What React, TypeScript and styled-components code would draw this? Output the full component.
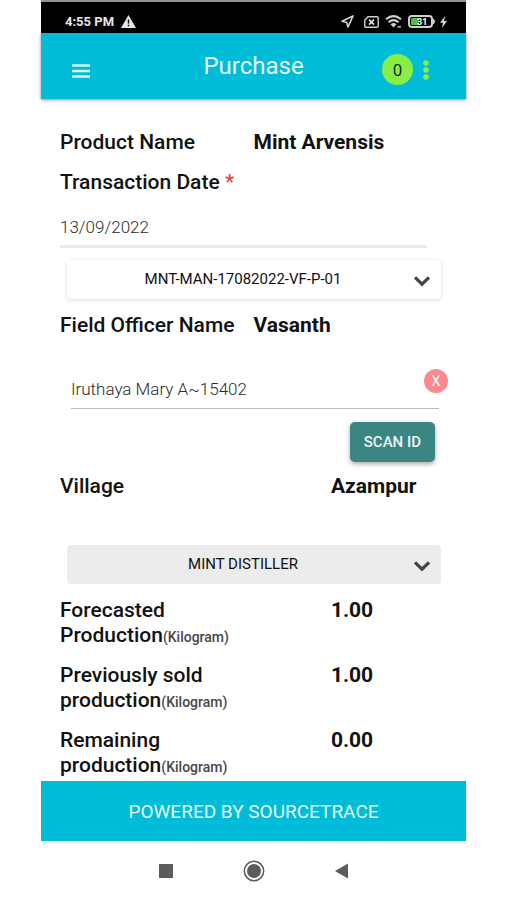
import React from "react";
import styled, { createGlobalStyle } from "styled-components";

const GlobalStyle = createGlobalStyle`
  *, *::before, *::after { box-sizing: border-box; }
  body {
    margin: 0;
    background: #fff;
    color: #121212;
    font-family: Roboto, "Liberation Sans", sans-serif;
  }
  button, input, select { font-family: inherit; }
`;

const Screen = styled.div`
  display: flex;
  flex-direction: column;
  min-height: 100vh;
  margin: 0 40px 0 41px;
`;

const StatusBar = styled.div`
  display: flex;
  align-items: center;
  justify-content: space-between;
  height: 33px;
  padding: 8px 19px 0 24px;
  border-top: 2px solid #929292;
  background: #000;
  color: #e6e6e6;
`;

const StatusGroup = styled.div<{ $gap: number }>`
  display: flex;
  align-items: center;
  gap: ${(p) => p.$gap}px;
`;

const Clock = styled.span`
  font-size: 13px;
  font-weight: 700;
  line-height: 16px;
`;

const Header = styled.header`
  display: grid;
  grid-template-columns: 78px 1fr 78px;
  align-items: center;
  height: 66px;
  background: #00bcd9;
  box-shadow: 0 1px 3px rgba(0, 0, 0, 0.45);
`;

const Title = styled.h1`
  margin: 0;
  color: #e4fbff;
  font-size: 24px;
  font-weight: 400;
  line-height: 28px;
  text-align: center;
`;

const IconButton = styled.button`
  display: flex;
  padding: 0;
  border: 0;
  background: none;
  cursor: pointer;
`;

const MenuButton = styled(IconButton)`
  padding: 10px 0 0 31px;
`;

const HeaderActions = styled.div`
  display: flex;
  align-items: center;
  justify-content: flex-end;
  gap: 10px;
  padding: 7px 37px 0 0;
`;

const Count = styled.span`
  display: flex;
  flex: none;
  align-items: center;
  justify-content: center;
  width: 31px;
  height: 31px;
  border-radius: 50%;
  background: #86ee46;
  color: #17300c;
  font-size: 17px;
`;

const Form = styled.form`
  display: flex;
  flex: 1;
  flex-direction: column;
  padding: 31px 19px 3px;
`;

const Row = styled.div<{ $label: number; $gap: number }>`
  display: grid;
  grid-template-columns: ${(p) => p.$label}% 1fr;
  margin-bottom: ${(p) => p.$gap}px;
  font-size: 21px;
  line-height: 25px;

  &:last-child { margin-bottom: 0; }
`;

const Label = styled.span`
  font-weight: 500;
  white-space: nowrap;
`;

const Value = styled.span`
  font-weight: 700;
`;

const Line = styled.span`
  display: block;
`;

const Unit = styled.small`
  color: #484848;
  font-size: 14px;
  font-weight: 500;
  line-height: 16px;
`;

const DateLabel = styled.label`
  font-size: 21px;
  font-weight: 500;
  line-height: 25px;
`;

const Required = styled.span`
  color: #f44336;
`;

const TextInput = styled.input`
  width: 100%;
  height: 40px;
  padding: 0;
  border: 0;
  border-bottom: 1px solid #bdbdbd;
  border-radius: 0;
  background: none;
  color: #2c2c2c;
  font-size: 17px;
  font-weight: 300;
  outline: none;
`;

const DateInput = styled(TextInput)`
  width: auto;
  margin: 13px 20px 12px 0;
  border-bottom: 3px solid #ebebeb;
`;

const SelectBox = styled.div<{ $filled?: boolean }>`
  display: grid;
  grid-template-columns: 1fr;
  align-items: center;
  margin: 0 6px 14px 7px;
  border-radius: 4px;
  background: ${(p) => (p.$filled ? "#ececec" : "#fff")};
  box-shadow: ${(p) => (p.$filled ? "none" : "0 1px 4px rgba(0, 0, 0, 0.15)")};

  > * { grid-area: 1 / 1; }
  > svg { justify-self: end; margin: 2px 10px 0 0; pointer-events: none; }
`;

const Select = styled.select`
  width: 100%;
  height: 39px;
  padding: 0 34px 2px 12px;
  border: 0;
  appearance: none;
  background: none;
  color: #111;
  font-size: 15px;
  font-weight: 400;
  text-align: center;
  text-align-last: center;
`;

const FarmerField = styled.div`
  position: relative;
  margin: 0 8px 13px 11px;
`;

const ClearButton = styled.button`
  position: absolute;
  top: 0;
  right: -9px;
  width: 24px;
  height: 24px;
  padding: 0;
  border: 0;
  border-radius: 50%;
  background: #f98a8c;
  color: #fff;
  font-size: 15px;
  line-height: 24px;
  cursor: pointer;
`;

const ScanButton = styled.button`
  align-self: flex-end;
  height: 40px;
  margin: 0 12px 12px 0;
  padding: 0 14px 1px;
  border: 0;
  border-radius: 5px;
  background: #3b8582;
  box-shadow: 0 2px 5px rgba(0, 0, 0, 0.35);
  color: #e9f6f5;
  font-size: 15px;
  font-weight: 500;
  cursor: pointer;
`;

const Footer = styled.footer`
  display: flex;
  align-items: center;
  justify-content: center;
  height: 60px;
  background: #00bcd9;
  color: #e4fbff;
  font-size: 19px;
`;

const NavBar = styled.nav`
  display: flex;
  align-items: center;
  justify-content: center;
  gap: 66px;
  height: 59px;
`;

const Chevron = () => (
  <svg width="18" height="12" viewBox="0 0 18 12" fill="none" aria-hidden="true">
    <path d="M2 2.3 9 9.2l7-6.9" stroke="#454545" strokeWidth="3.2" />
  </svg>
);

const WarningIcon = () => (
  <svg width="15" height="13" viewBox="0 0 15 13" aria-hidden="true">
    <path d="M7.5 0 15 13H0Z" fill="#e6e6e6" />
    <path d="M7.5 4.5v4M7.5 9.7v1.6" stroke="#000" strokeWidth="1.4" />
  </svg>
);

const LocationIcon = () => (
  <svg width="13" height="13" viewBox="0 0 13 13" fill="none" aria-hidden="true">
    <path d="M12 1 1 6.2l4.6 1.2L7 12Z" stroke="#d5d5d5" strokeWidth="1.6" strokeLinejoin="round" />
  </svg>
);

const SimIcon = () => (
  <svg width="15" height="12" viewBox="0 0 15 12" fill="none" aria-hidden="true">
    <path d="M4 .8h9q1.2 0 1.2 1.2v8q0 1.2-1.2 1.2H2Q.8 11.2.8 10V4Z" stroke="#cfcfcf" strokeWidth="1.4" />
    <path d="m5 3.6 5 5m0-5-5 5" stroke="#e6e6e6" strokeWidth="1.6" />
  </svg>
);

const WifiIcon = () => (
  <svg width="17" height="13" viewBox="0 0 17 13" fill="none" aria-hidden="true">
    <g stroke="#cfcfcf" strokeWidth="2.1">
      <path d="M1 4.2q7.500-6 15 0" />
      <path d="M3.5 7.2q5-4 10 0" />
    </g>
    <path d="M5.5 9.2q3-2.400 6 0l-3 3.300Z" fill="#cfcfcf" />
    <path d="M12.5 11.8h3.500" stroke="#cfcfcf" strokeWidth="1.4" />
  </svg>
);

const BatteryIcon = () => (
  <svg width="28" height="13" viewBox="0 0 28 13" aria-hidden="true">
    <rect x="1" y="1" width="23" height="11" rx="3" fill="#000" stroke="#cfcfcf" strokeWidth="2" />
    <rect x="3" y="3" width="8" height="7" rx="1" fill="#56b947" />
    <path d="M25.5 4q2 2.500 0 5Z" fill="#cfcfcf" stroke="#cfcfcf" />
    <text x="9" y="10" fill="#fff" fontSize="9" fontWeight="700">31</text>
  </svg>
);

const BoltIcon = () => (
  <svg width="7" height="12" viewBox="0 0 7 12" aria-hidden="true">
    <path d="M5 0 0 6.800h3L2 12l5-7H4Z" fill="#d5d5d5" />
  </svg>
);

const MenuIcon = () => (
  <svg width="18" height="14" viewBox="0 0 18 14" aria-hidden="true">
    <path d="M0 1.500h18M0 7h18M0 12.500h18" stroke="#d6f8ff" strokeWidth="2.600" />
  </svg>
);

const MoreIcon = () => (
  <svg width="6" height="20" viewBox="0 0 6 20" fill="#86ee46" aria-hidden="true">
    <circle cx="3" cy="3" r="2.800" />
    <circle cx="3" cy="10" r="2.800" />
    <circle cx="3" cy="17" r="2.800" />
  </svg>
);

const quantities = [
  { first: "Forecasted", second: "Production", value: "1.00" },
  { first: "Previously sold", second: "production", value: "1.00" },
  { first: "Remaining", second: "production", value: "0.00" },
];

export default function App() {
  return (
    <>
      <GlobalStyle />
      <Screen>
        <StatusBar>
          <StatusGroup $gap={7}>
            <Clock>4:55 PM</Clock>
            <WarningIcon />
          </StatusGroup>
          <StatusGroup $gap={10}>
            <LocationIcon />
            <StatusGroup $gap={6}>
              <SimIcon />
              <WifiIcon />
              <StatusGroup $gap={4}>
                <BatteryIcon />
                <BoltIcon />
              </StatusGroup>
            </StatusGroup>
          </StatusGroup>
        </StatusBar>
        <Header>
          <MenuButton type="button" aria-label="Menu">
            <MenuIcon />
          </MenuButton>
          <Title>Purchase</Title>
          <HeaderActions>
            <Count>0</Count>
            <IconButton type="button" aria-label="More options">
              <MoreIcon />
            </IconButton>
          </HeaderActions>
        </Header>
        <Form onSubmit={(e) => e.preventDefault()}>
          <Row $label={50} $gap={15}>
            <Label>Product Name</Label>
            <Value>Mint Arvensis</Value>
          </Row>
          <DateLabel htmlFor="date">
            Transaction Date <Required>*</Required>
          </DateLabel>
          <DateInput id="date" defaultValue="13/09/2022" />
          <SelectBox>
            <Select aria-label="Batch" defaultValue="MNT-MAN-17082022-VF-P-01">
              <option>MNT-MAN-17082022-VF-P-01</option>
            </Select>
            <Chevron />
          </SelectBox>
          <Row $label={50} $gap={31}>
            <Label>Field Officer Name</Label>
            <Value>Vasanth</Value>
          </Row>
          <FarmerField>
            <TextInput aria-label="Farmer" defaultValue="Iruthaya Mary A~15402" />
            <ClearButton type="button" aria-label="Clear farmer">X</ClearButton>
          </FarmerField>
          <ScanButton type="button">SCAN ID</ScanButton>
          <Row $label={70} $gap={46}>
            <Label>Village</Label>
            <Value>Azampur</Value>
          </Row>
          <SelectBox $filled>
            <Select aria-label="Seller type" defaultValue="MINT DISTILLER">
              <option>MINT DISTILLER</option>
            </Select>
            <Chevron />
          </SelectBox>
          {quantities.map((q) => (
            <Row key={q.first} $label={70} $gap={15}>
              <Label>
                <Line>{q.first}</Line>
                {q.second}
                <Unit>(Kilogram)</Unit>
              </Label>
              <Value>{q.value}</Value>
            </Row>
          ))}
        </Form>
        <Footer>POWERED BY SOURCETRACE</Footer>
        <NavBar aria-label="System navigation">
          <IconButton type="button" aria-label="Recent apps">
            <svg width="22" height="22" viewBox="0 0 22 22" aria-hidden="true">
              <rect x="4" y="4" width="14" height="14" fill="#5c5c5c" />
            </svg>
          </IconButton>
          <IconButton type="button" aria-label="Home">
            <svg width="22" height="22" viewBox="0 0 22 22" aria-hidden="true">
              <circle cx="11" cy="11" r="9.700" fill="none" stroke="#5c5c5c" strokeWidth="1.500" />
              <circle cx="11" cy="11" r="7" fill="#5c5c5c" />
            </svg>
          </IconButton>
          <IconButton type="button" aria-label="Back">
            <svg width="22" height="22" viewBox="0 0 22 22" aria-hidden="true">
              <path d="M17 3.500v15L4 11Z" fill="#5c5c5c" />
            </svg>
          </IconButton>
        </NavBar>
      </Screen>
    </>
  );
}
